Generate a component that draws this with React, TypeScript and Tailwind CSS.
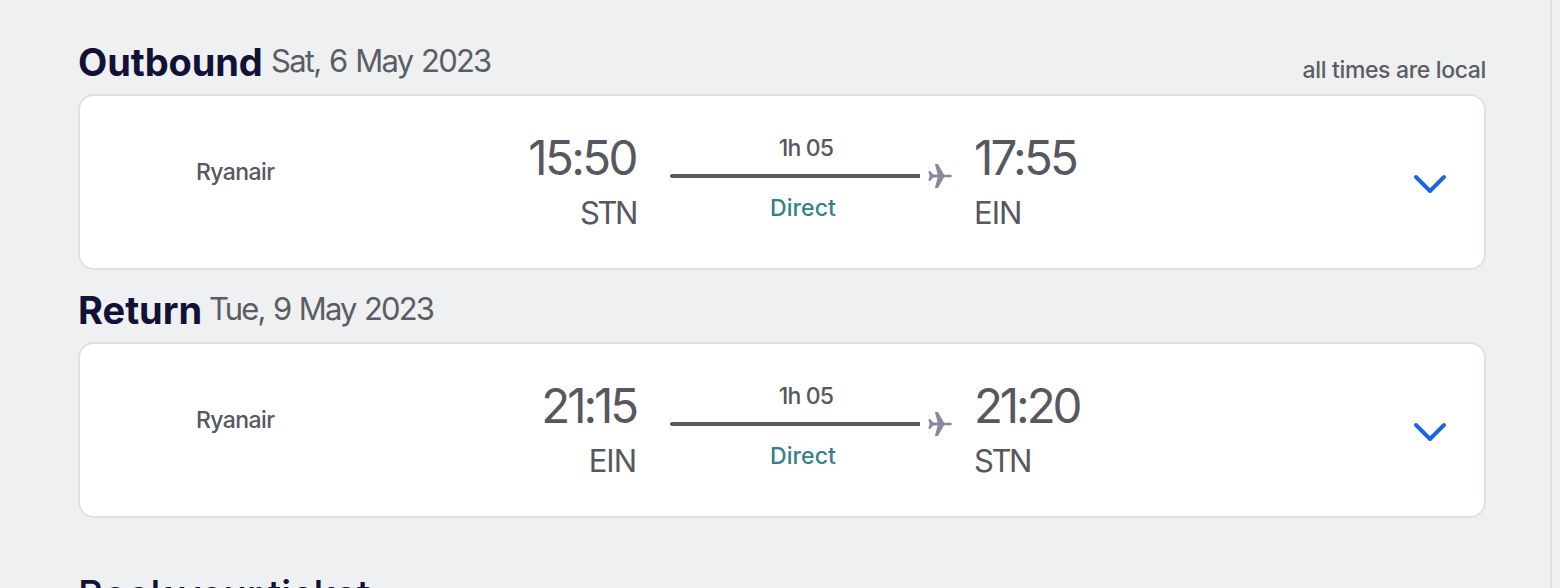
type Place = { time: string; code: string };
type LegProps = {
  title: string;
  titleClass: string;
  date: string;
  dateClass: string;
  note?: string;
  from: Place;
  to: Place;
};

const codeTracking: Record<string, string> = {
  STN: "tracking-[-2.4px]",
  EIN: "tracking-[-1px]",
};

const timeTracking: Record<string, string> = {
  "15:50": "tracking-[-2.6px]",
  "17:55": "tracking-[-2.8px]",
  "21:15": "tracking-[-3.1px]",
  "21:20": "tracking-[-3.1px]",
};

function Plane() {
  return (
    <svg className="ml-2 mt-[68px] h-6 w-6 shrink-0 text-[#8b8798]" viewBox="0 0 24 24" fill="currentColor">
      <path d="M22.600 10.800H16L10.600 1Q10 0 9 0H7.600Q6.700 0 7 .9L9.800 10.600H5.200L2.900 7.800Q2.500 7.300 1.900 7.300H.9Q.2 7.300.4 8L1.700 12 .4 16Q.2 16.700.9 16.700H1.900Q2.500 16.700 2.900 16.200L5.200 13.400H9.800L7 23.100Q6.700 24 7.600 24H9Q10 24 10.600 23L16 13.200H22.600A1.200 1.200 0 0 0 22.600 10.800Z" />
    </svg>
  );
}

function PlaceText({ place }: { place: Place }) {
  return (
    <>
      <span className={`text-[47.5px] font-[420] leading-[50px] ${timeTracking[place.time]}`}>{place.time}</span>
      <span className={`mt-[10px] text-[31px] font-[420] leading-10 ${codeTracking[place.code]}`}>{place.code}</span>
    </>
  );
}

function Leg({ title, titleClass, date, dateClass, note, from, to }: LegProps) {
  return (
    <section>
      <header className="flex h-[72px] items-start">
        <h2 className={`mt-5 shrink-0 whitespace-nowrap text-[38px] font-bold leading-10 text-[#111236] ${titleClass}`}>{title}</h2>
        <span className={`mt-5 whitespace-nowrap text-[31px] font-[430] leading-[38px] text-[#5c5d64] ${dateClass}`}>{date}</span>
        {note && (
          <span className="ml-auto mt-9 whitespace-nowrap text-[23px] font-[450] leading-6 tracking-[-0.35px] text-[#5c5d64]">{note}</span>
        )}
      </header>
      <div className="flex h-44 items-start rounded-2xl border-2 border-[#dfe2e5] bg-white font-[450] text-[#56575f]">
        <span className="ml-[116px] mt-[64px] w-[200px] text-[23px] leading-6 tracking-[-0.6px]">Ryanair</span>
        <div className="flex w-[240px] flex-col items-end pt-[37px]">
          <PlaceText place={from} />
        </div>
        <div className="ml-[34px] flex w-[250px] flex-col items-center pt-[40px]">
          <span className="ml-[22px] text-[23px] leading-6 tracking-[-0.8px]">1h 05</span>
          <span className="mt-[14px] h-1 w-full rounded-l-full bg-[#56575f]" />
          <span className="ml-[16px] mt-[18px] text-[23px] leading-6 tracking-[0.1px] text-[#358087]">Direct</span>
        </div>
        <Plane />
        <div className="ml-[22px] flex flex-col items-start pt-[37px]">
          <PlaceText place={to} />
        </div>
        <svg className="ml-auto mr-9 mt-[76px] h-6 w-9" viewBox="0 0 36 24" fill="none" stroke="#1b66dd" strokeWidth="4" strokeLinecap="round" strokeLinejoin="round">
          <path d="M4 5 18 19 32 5" />
        </svg>
      </div>
    </section>
  );
}

export default function App() {
  return (
    <main className="flex h-[588px] w-[1560px] overflow-hidden bg-[#eff0f2] font-['Inter',sans-serif]">
      <div className="w-[1552px] shrink-0 border-r-2 border-[#dfe2e5] pl-[78px] pr-[64px] pt-[22px]">
        <Leg
          title="Outbound"
          titleClass="w-[193px] tracking-[-0.1px]"
          date="Sat, 6 May 2023"
          dateClass="tracking-[-1.75px] [word-spacing:1.7px]"
          note="all times are local"
          from={{ time: "15:50", code: "STN" }}
          to={{ time: "17:55", code: "EIN" }}
        />
        <Leg
          title="Return"
          titleClass="w-[131px] tracking-[0px]"
          date="Tue, 9 May 2023"
          dateClass="tracking-[-1.9px] [word-spacing:1.7px]"
          from={{ time: "21:15", code: "EIN" }}
          to={{ time: "21:20", code: "STN" }}
        />
        <h2 className="mt-[53px] whitespace-nowrap text-[39px] font-medium leading-[48px] tracking-[-0.1px] text-[#111236] [word-spacing:-4px]">
          Book your ticket
        </h2>
      </div>
    </main>
  );
}
